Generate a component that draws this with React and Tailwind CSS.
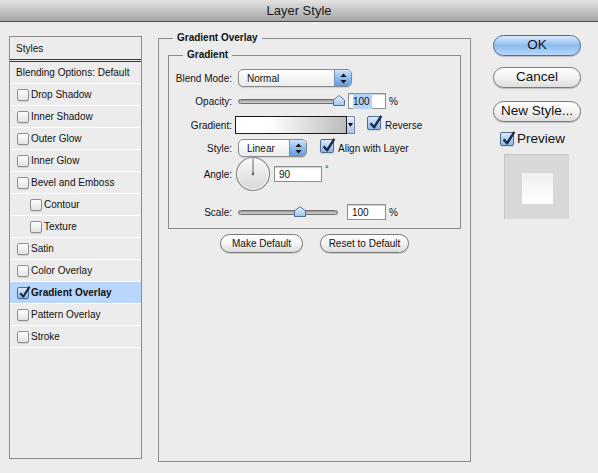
import React from 'react';

const styles = [
  { name: 'Drop Shadow' },
  { name: 'Inner Shadow' },
  { name: 'Outer Glow' },
  { name: 'Inner Glow' },
  { name: 'Bevel and Emboss' },
  { name: 'Contour', sub: true },
  { name: 'Texture', sub: true },
  { name: 'Satin' },
  { name: 'Color Overlay' },
  { name: 'Gradient Overlay', on: true },
  { name: 'Pattern Overlay' },
  { name: 'Stroke' },
];

const Box = ({ checked, big }) => (
  <span
    className={`relative inline-block shrink-0 rounded-[2px] border shadow-[0_1px_1px_rgba(0,0,0,0.12)] ${
      big ? 'h-[14px] w-[14px]' : 'h-[12px] w-[12px]'
    } ${
      checked
        ? 'border-[#4f6e94] bg-gradient-to-b from-[#dceafb] to-[#8ab7ea]'
        : 'border-[#8f8f8f] bg-gradient-to-b from-white to-[#e2e2e2]'
    }`}
  >
    {checked && (
      <svg
        className="absolute left-[0px] top-[-3px]"
        width={big ? 15 : 13}
        height={big ? 16 : 14}
        viewBox="0 0 13 14"
      >
        <path d="M2.2 8.2 L5.3 11.6 L11.6 1.6" fill="none" stroke="#1c2b46" strokeWidth="2.1" strokeLinejoin="round" />
      </svg>
    )}
  </span>
);

const Stepper = () => (
  <span className="flex h-full w-[17px] items-center justify-center border-l border-[#6f93c2] bg-gradient-to-b from-[#cfe3fb] via-[#8fbcee] to-[#5f9be0]">
    <svg width="7" height="11" viewBox="0 0 7 11">
      <path d="M3.5 0.5 L6.5 4 H0.5 Z" fill="#111" />
      <path d="M3.5 10.5 L6.5 7 H0.5 Z" fill="#111" />
    </svg>
  </span>
);

const Select = ({ value, w }) => (
  <div
    className={`flex h-[18px] items-center overflow-hidden rounded-[5px] border border-[#8a8a8a] bg-gradient-to-b from-white to-[#ebebeb] shadow-[0_1px_1px_rgba(0,0,0,0.12)] ${w}`}
  >
    <span className="flex-1 pl-[8px]">{value}</span>
    <Stepper />
  </div>
);

const Slider = ({ pct, w }) => (
  <div className={`relative flex h-[18px] items-center ${w}`}>
    <div className="h-[5px] w-full rounded-full border border-[#6d6d6d] bg-gradient-to-b from-[#9b9b9b] to-[#d2d2d2]" />
    <svg
      className="absolute top-[3px]"
      style={{ left: `calc(${pct}% - 6px)` }}
      width="12"
      height="11"
      viewBox="0 0 12 11"
    >
      <defs>
        <linearGradient id="th" x1="0" y1="0" x2="0" y2="1">
          <stop offset="0" stopColor="#eef5fd" />
          <stop offset="1" stopColor="#9cc3ee" />
        </linearGradient>
      </defs>
      <path d="M0.5 5 L6 0.6 L11.5 5 V10.5 H0.5 Z" fill="url(#th)" stroke="#4e729c" />
    </svg>
  </div>
);

const Field = ({ children, w }) => (
  <div className={`flex h-[16px] items-center border border-[#8f8f8f] bg-white pl-[4px] shadow-[inset_0_1px_1px_rgba(0,0,0,0.2)] ${w}`}>
    {children}
  </div>
);

const Label = ({ children }) => <span className="w-[63px] shrink-0 text-right">{children}</span>;

const PillButton = ({ children, w, blue }) => (
  <button
    className={`flex h-[21px] items-center justify-center rounded-full border text-[13.5px] shadow-[0_1px_1px_rgba(0,0,0,0.2)] ${w} ${
      blue
        ? 'border-[#4b6f9d] bg-gradient-to-b from-[#dbeafc] via-[#8dbbef] to-[#b8d8fa]'
        : 'border-[#7a7a7a] bg-gradient-to-b from-white via-[#f2f2f2] to-[#dedede]'
    }`}
  >
    {children}
  </button>
);

const SmallButton = ({ children, w }) => (
  <button
    className={`flex h-[19px] items-center justify-center rounded-full border border-[#7a7a7a] bg-gradient-to-b from-white via-[#f3f3f3] to-[#dcdcdc] shadow-[0_1px_1px_rgba(0,0,0,0.15)] ${w}`}
  >
    {children}
  </button>
);

const Dial = () => (
  <svg width="36" height="36" viewBox="0 0 36 36" className="block shrink-0">
    <defs>
      <linearGradient id="dial" x1="0" y1="0" x2="0" y2="1">
        <stop offset="0" stopColor="#fafafa" />
        <stop offset="1" stopColor="#d6d6d6" />
      </linearGradient>
    </defs>
    <circle cx="18" cy="18" r="16.5" fill="url(#dial)" stroke="#8a8a8a" strokeWidth="1.2" />
    <circle cx="18" cy="18" r="15.3" fill="none" stroke="#ffffff" strokeWidth="0.8" opacity="0.8" />
    <line x1="18" y1="18" x2="18" y2="2.5" stroke="#6a6a6a" strokeWidth="1" />
    <circle cx="18" cy="18" r="1.4" fill="#6a6a6a" />
  </svg>
);

export default function App() {
  return (
    <div className="h-[473px] w-[598px] overflow-hidden bg-[#ececec] font-['Liberation_Sans',Arial,sans-serif] text-[10px] text-[#111]">
      <div className="h-[22px] border-b border-[#4f4f4f] bg-gradient-to-b from-[#e4e4e4] to-[#a6a6a6] text-center text-[13px] leading-[21px] text-[#1a1a1a]">
        Layer Style
      </div>

      <div className="flex pl-[9px] pt-[9px]">
        {/* styles list */}
        <div className="mt-[5px] h-[423px] w-[133px] shrink-0 border border-[#8a8a8a]">
          <div className="flex h-[25px] items-center border-b-[3px] border-double border-[#3a3a3a] pl-[6px]">
            Styles
          </div>
          <div className="flex h-[22px] items-center border-b border-white pl-[6px]">Blending Options: Default</div>
          {styles.map((s) => (
            <div
              key={s.name}
              className={`flex h-[22px] items-center gap-[2px] border-b border-white ${s.sub ? 'pl-[20px]' : 'pl-[7px]'} ${
                s.on ? 'bg-[#b9d6fc] font-bold' : ''
              }`}
            >
              <Box checked={s.on} />
              <span>{s.name}</span>
            </div>
          ))}
        </div>

        {/* main settings */}
        <fieldset className="ml-[16px] h-[431px] w-[313px] shrink-0 border border-[#8a8a8a]">
          <legend className="ml-[14px] px-[4px] text-[10px] font-bold leading-[14px]">Gradient Overlay</legend>

          <fieldset className="mx-[9px] mt-[3px] border border-[#8a8a8a] pb-[7px]">
            <legend className="ml-[14px] px-[4px] font-bold leading-[14px]">Gradient</legend>

            <div className="mt-[7px] flex h-[18px] items-center">
              <Label>Blend Mode:</Label>
              <div className="ml-[6px]">
                <Select value="Normal" w="w-[114px]" />
              </div>
            </div>

            <div className="mt-[5px] flex h-[18px] items-center">
              <Label>Opacity:</Label>
              <div className="ml-[6px]">
                <Slider pct={99} w="w-[102px]" />
              </div>
              <div className="ml-[8px]">
                <Field w="w-[38px]">
                  <span className="bg-[#b3d3fb] pr-[2px]">100</span>
                </Field>
              </div>
              <span className="ml-[3px]">%</span>
            </div>

            <div className="mt-[6px] flex h-[18px] items-center">
              <Label>Gradient:</Label>
              <div className="ml-[3px] h-[18px] w-[112px] border border-[#1b1b1b] bg-gradient-to-r from-white from-[30%] to-[#bcbcbc]" />
              <div className="flex h-[18px] w-[8px] items-center justify-center border border-l-0 border-[#7b8ea8] bg-gradient-to-b from-[#e4eefa] to-[#a9c6e8]">
                <svg width="5" height="4" viewBox="0 0 5 4">
                  <path d="M0 0 H5 L2.5 4 Z" fill="#111" />
                </svg>
              </div>
              <span className="ml-[12px]">
                <Box checked big />
              </span>
              <span className="ml-[4px]">Reverse</span>
            </div>

            <div className="mt-[5px] flex h-[18px] items-center">
              <Label>Style:</Label>
              <div className="ml-[6px]">
                <Select value="Linear" w="w-[69px]" />
              </div>
              <span className="ml-[13px]">
                <Box checked big />
              </span>
              <span className="ml-[4px]">Align with Layer</span>
            </div>

            <div className="flex h-[34px] items-center">
              <Label>Angle:</Label>
              <div className="ml-[3px]">
                <Dial />
              </div>
              <div className="ml-[3px] flex items-start">
                <Field w="w-[48px]">90</Field>
                <span className="ml-[3px] mt-[-2px] text-[9px] leading-[10px]">°</span>
              </div>
            </div>

            <div className="mt-[12px] flex h-[18px] items-center">
              <Label>Scale:</Label>
              <div className="ml-[6px]">
                <Slider pct={62} w="w-[100px]" />
              </div>
              <div className="ml-[9px]">
                <Field w="w-[39px]">100</Field>
              </div>
              <span className="ml-[3px]">%</span>
            </div>
          </fieldset>

          <div className="mt-[5px] flex justify-center gap-[17px]">
            <SmallButton w="w-[83px]">Make Default</SmallButton>
            <SmallButton w="w-[89px]">Reset to Default</SmallButton>
          </div>
        </fieldset>

        {/* buttons */}
        <div className="ml-[22px] flex w-[88px] shrink-0 flex-col">
          <div className="mt-[4px]">
            <PillButton w="w-[88px]" blue>
              OK
            </PillButton>
          </div>
          <div className="mt-[11px]">
            <PillButton w="w-[88px]">Cancel</PillButton>
          </div>
          <div className="mt-[13px]">
            <PillButton w="w-[88px]">New Style...</PillButton>
          </div>
          <div className="mt-[10px] flex h-[14px] items-center pl-[7px]">
            <Box checked big />
            <span className="ml-[3px] text-[13.5px]">Preview</span>
          </div>
          <div className="ml-[11px] mt-[8px] flex h-[65px] w-[65px] items-center justify-center border-l border-t border-[#c6c6c6] bg-[#d8d8d8]">
            <div className="mt-[2px] h-[31px] w-[31px] bg-gradient-to-b from-[#efefef] to-white" />
          </div>
        </div>
      </div>
    </div>
  );
}
